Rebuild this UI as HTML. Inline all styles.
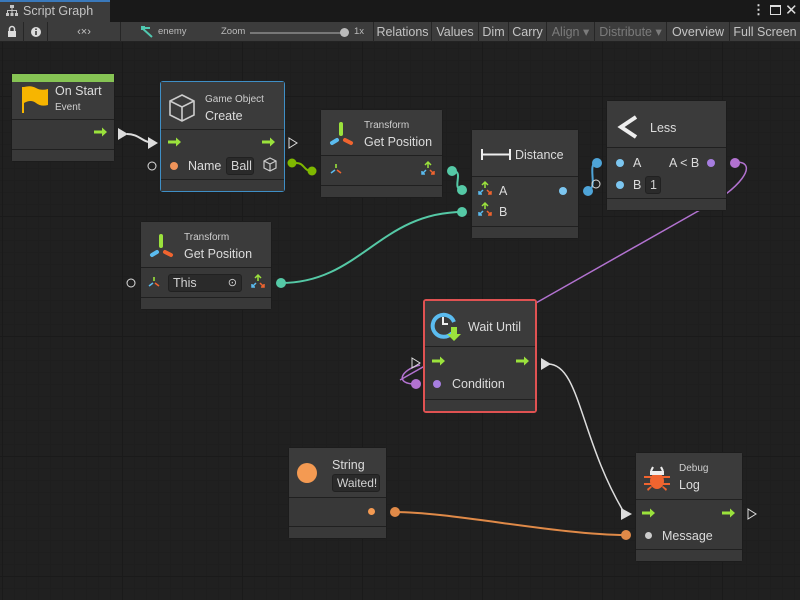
<!DOCTYPE html>
<html><head><meta charset="utf-8"><style>
*{box-sizing:border-box;margin:0;padding:0}
body{width:800px;height:600px;overflow:hidden;background:#202020;font-family:"Liberation Sans",sans-serif;color:#d2d2d2;position:relative}
.grid{position:absolute;left:0;top:42px;width:800px;height:558px;
background-image:linear-gradient(#1a1a1a 1px,transparent 1px),linear-gradient(90deg,#1a1a1a 1px,transparent 1px),linear-gradient(#1e1e1e 1px,transparent 1px),linear-gradient(90deg,#1e1e1e 1px,transparent 1px);
background-size:120px 120px,120px 120px,12px 12px,12px 12px;background-position:0 54px,2px 0,0 6px,2px 0}
.tabbar{position:absolute;left:0;top:0;width:800px;height:22px;background:#191919}
.tab{position:absolute;left:0;top:0;width:110px;height:22px;background:#3c3c3c;border-top:2px solid #3a79bb;font-size:12.5px;line-height:19px;padding-left:23px;color:#c4c4c4}
.tb{position:absolute;top:22px;left:0;width:800px;height:20px;background:#3c3c3c;border-bottom:1px solid #232323;font-size:12.5px}
.tb span{position:absolute;top:0;height:20px;line-height:20px;color:#c4c4c4;border-right:1px solid #262626;text-align:center}
.n{position:absolute;background:#383838;border:1px solid #1c1c1c;border-radius:3px}
.n .h{position:absolute;left:0;right:0;top:0;background:#3b3b3b;border-bottom:1px solid #202020}
.n .f{position:absolute;left:0;right:0;bottom:0;height:12px;border-top:1px solid #202020;background:#393939}
.t{position:absolute;font-size:12.5px;color:#dcdcdc;white-space:nowrap}
.s{position:absolute;font-size:10px;color:#cfcfcf;white-space:nowrap}
.dot{position:absolute;width:8px;height:8px;border-radius:50%}
.fld{position:absolute;background:#2a2a2a;border:1px solid #212121;border-radius:3px;font-size:12.5px;color:#d2d2d2;padding-left:4px;line-height:16px}
svg{position:absolute;left:0;top:0}
</style></head><body>
<div class="grid"></div>
<div class="tabbar"><div class="tab">Script Graph</div>
<svg width="20" height="20" style="left:6px;top:4px"><g fill="#c4c4c4"><rect x="4" y="1" width="4" height="3"/><rect x="5.5" y="4" width="1" height="3"/><rect x="1" y="6" width="10" height="1"/><rect x="1" y="6" width="1" height="3"/><rect x="5.5" y="6" width="1" height="3"/><rect x="10" y="6" width="1" height="3"/><rect x="0" y="9" width="3" height="3"/><rect x="4.5" y="9" width="3" height="3"/><rect x="9" y="9" width="3" height="3"/></g></svg>
<div style="position:absolute;left:752px;top:2px;color:#ddd;font-size:13px;font-weight:bold">⋮</div>
<div style="position:absolute;left:770px;top:5px;width:11px;height:10px;border:1.5px solid #ddd;border-top-width:2.5px"></div>
<div style="position:absolute;left:785px;top:1px;color:#ddd;font-size:15px">✕</div>
</div>
<div class="tb">
<span style="left:0;width:24px"></span>
<span style="left:24px;width:24px"></span>
<span style="left:48px;width:73px;font-size:11px">‹×›</span>
<span style="left:121px;width:253px"></span>
<span style="left:374px;width:58px">Relations</span>
<span style="left:432px;width:47px">Values</span>
<span style="left:479px;width:30px">Dim</span>
<span style="left:509px;width:38px">Carry</span>
<span style="left:547px;width:48px;color:#7b7b7b">Align ▾</span>
<span style="left:595px;width:72px;color:#7b7b7b">Distribute ▾</span>
<span style="left:667px;width:63px">Overview</span>
<span style="left:730px;width:70px;border:none">Full Screen</span>
</div>
<svg width="60" height="20" style="left:0;top:22px"><g fill="#ddd"><rect x="8" y="9" width="8" height="6"/><path d="M9.5 9 V7 A2.5 2.5 0 0 1 14.5 7 V9" fill="none" stroke="#ddd" stroke-width="1.5"/><circle cx="36" cy="10" r="5"/></g><rect x="35.2" y="9" width="1.6" height="4" fill="#3c3c3c"/><rect x="35.2" y="6.5" width="1.6" height="1.5" fill="#3c3c3c"/></svg>
<svg width="20" height="16" style="left:140px;top:25px"><path d="M2 3 L12 12 M2 3 L10 3" stroke="#50c8b0" stroke-width="2" fill="none"/><rect x="1" y="1" width="4" height="4" fill="#50c8b0"/></svg>
<div style="position:absolute;left:158px;top:26px;font-size:9.5px;color:#bbb">enemy</div>
<div style="position:absolute;left:221px;top:26px;font-size:9.5px;color:#bbb">Zoom</div>
<div style="position:absolute;left:250px;top:32px;width:94px;height:2px;background:#777"></div>
<div style="position:absolute;left:340px;top:28px;width:9px;height:9px;border-radius:50%;background:#bbb"></div>
<div style="position:absolute;left:354px;top:26px;font-size:9.5px;color:#bbb">1x</div>

<svg width="800" height="600">
<g fill="none" stroke-width="2">
<path d="M127 134 C140 134,142 143,155 143" stroke="#ddd"/>
<path d="M296 163 C305 163,303 171,312 171" stroke="#7fb800"/>
<path d="M453 171 C465 171,450 190,463 190" stroke="#55c9a6"/>
<path d="M281 283 C360 283,380 212,463 212" stroke="#55c9a6"/>
<path d="M587 190 C600 190,585 162,598 162" stroke="#4ea4d8"/>
<path d="M736 162 C760 162,740 190,700 210 L400 380" stroke="#b272d0" stroke-width="1.5"/>
<path d="M415 384 C395 384,400 370,420 365" stroke="#b272d0" stroke-width="1.5"/>
<path d="M548 364 C580 364,580 440,625 514" stroke="#ddd" stroke-width="1.5"/>
<path d="M395 512 C450 512,560 535,626 535" stroke="#e08a48"/>
</g>
<g fill="#ddd"><path d="M118 128 L128 134 L118 140Z"/><path d="M148 137 L158 143 L148 149Z"/><path d="M541 358 L551 364 L541 370Z"/><path d="M621 508 L632 514 L621 520Z"/></g>
<g fill="none" stroke="#ddd" stroke-width="1"><path d="M289 138 L297 143 L289 148Z"/><path d="M412 358 L420 363 L412 368Z"/><path d="M748 509 L756 514 L748 519Z"/><circle cx="152" cy="166" r="4"/><circle cx="131" cy="283" r="4"/><circle cx="596" cy="184" r="4"/></g>
<circle cx="292" cy="163" r="4.5" fill="#7fb800"/><circle cx="312" cy="171" r="4.5" fill="#7fb800"/>
<circle cx="452" cy="171" r="5" fill="#55c9a6"/><circle cx="462" cy="190" r="5" fill="#55c9a6"/><circle cx="462" cy="212" r="5" fill="#55c9a6"/><circle cx="281" cy="283" r="5" fill="#55c9a6"/>
<circle cx="588" cy="191" r="5" fill="#4ea4d8"/><circle cx="597" cy="163" r="5" fill="#4ea4d8"/>
<circle cx="735" cy="163" r="5" fill="#b272d0"/><circle cx="416" cy="384" r="5" fill="#b272d0"/>
<circle cx="395" cy="512" r="5" fill="#e08a48"/><circle cx="626" cy="535" r="5" fill="#e08a48"/>
</svg>

<div class="n" style="left:11px;top:73px;width:104px;height:89px">
<div style="position:absolute;left:0;right:0;top:0;height:8px;background:#86c454"></div>
<div class="h" style="top:8px;height:38px"></div>
<svg width="30" height="30" style="left:9px;top:11px"><rect x="1" y="2" width="2" height="26" fill="#f7b500"/><path d="M3 2 Q10 0 15 3 T27 4 L27 20 Q20 22 15 18 T3 18Z" fill="#f7b500"/></svg>
<div class="t" style="left:43px;top:10px">On Start</div><div class="s" style="left:43px;top:28px">Event</div>
<div class="f"></div>
</div>
<div class="n" style="left:160px;top:81px;width:125px;height:111px;border-color:#3f8fc6">
<div class="h" style="height:48px"></div>
<svg width="30" height="30" style="left:6px;top:11px"><g fill="none" stroke="#ccc" stroke-width="1.6"><path d="M15 2 L27 8 L27 22 L15 28 L3 22 L3 8Z"/><path d="M3 8 L15 14 L27 8 M15 14 L15 28"/></g></svg>
<div class="s" style="left:44px;top:12px">Game Object</div><div class="t" style="left:44px;top:27px">Create</div>
<div class="dot" style="left:9px;top:80px;background:#f0945a"></div>
<div class="t" style="left:27px;top:77px">Name</div>
<div class="fld" style="left:65px;top:75px;width:28px;height:18px">Ball</div>
<svg width="16" height="16" style="left:101px;top:75px"><g fill="none" stroke="#ccc" stroke-width="1.2"><path d="M8 1 L14 4 L14 11 L8 14 L2 11 L2 4Z M2 4 L8 7 L14 4 M8 7 L8 14"/></g></svg>
<div class="f"></div>
</div>
<div class="n" style="left:320px;top:109px;width:123px;height:89px">
<div class="h" style="height:46px"></div>
<div class="s" style="left:43px;top:10px">Transform</div><div class="t" style="left:43px;top:25px">Get Position</div>
<div class="f"></div>
</div>
<div class="n" style="left:471px;top:129px;width:108px;height:110px">
<div class="h" style="height:47px"></div>
<svg width="30" height="12" style="left:9px;top:19px"><path d="M1 0 V11 M29 0 V11 M1 5.5 H29" stroke="#eee" stroke-width="2"/></svg>
<div class="t" style="left:43px;top:18px">Distance</div>
<div class="t" style="left:27px;top:54px">A</div><div class="t" style="left:27px;top:75px">B</div>
<div class="dot" style="left:87px;top:57px;background:#7cc6f0"></div>
<div class="f"></div>
</div>
<div class="n" style="left:606px;top:100px;width:121px;height:111px">
<div class="h" style="height:47px"></div>
<svg width="22" height="24" style="left:10px;top:14px"><path d="M19 2 L4 12 L19 22" fill="none" stroke="#eee" stroke-width="4"/></svg>
<div class="t" style="left:43px;top:20px">Less</div>
<div class="dot" style="left:9px;top:58px;background:#7cc6f0"></div><div class="t" style="left:26px;top:55px">A</div>
<div class="t" style="left:62px;top:55px">A &lt; B</div><div class="dot" style="left:100px;top:58px;background:#a77ee0"></div>
<div class="dot" style="left:9px;top:80px;background:#7cc6f0"></div><div class="t" style="left:26px;top:77px">B</div>
<div class="fld" style="left:38px;top:75px;width:16px;height:18px">1</div>
<div class="f"></div>
</div>
<div class="n" style="left:140px;top:221px;width:132px;height:89px">
<div class="h" style="height:46px"></div>
<div class="s" style="left:43px;top:10px">Transform</div><div class="t" style="left:43px;top:25px">Get Position</div>
<div class="fld" style="left:27px;top:52px;width:74px;height:18px">This<span style="position:absolute;right:4px;top:0;font-size:11px">⊙</span></div>
<div class="f"></div>
</div>
<div class="n" style="left:423px;top:299px;width:114px;height:114px;border:2px solid #e05252">
<div class="h" style="height:46px"></div>
<svg width="34" height="34" style="left:5px;top:9px"><path d="M22 23 A11 11 0 1 1 24 12" fill="none" stroke="#5bbcf0" stroke-width="4"/><path d="M13 7 V14 H18" fill="none" stroke="#eee" stroke-width="2"/><path d="M21 17 V24 H17 L24 31 L31 24 H27 V17Z" fill="#9be23c"/></svg>
<div class="t" style="left:43px;top:19px">Wait Until</div>
<div class="dot" style="left:8px;top:79px;background:#a77ee0"></div>
<div class="t" style="left:27px;top:76px">Condition</div>
<div class="f"></div>
</div>
<div class="n" style="left:288px;top:447px;width:99px;height:92px">
<div class="h" style="height:50px"></div>
<div style="position:absolute;left:8px;top:15px;width:20px;height:20px;border-radius:50%;background:#f49a52"></div>
<div class="t" style="left:43px;top:10px">String</div>
<div class="fld" style="left:43px;top:26px;width:48px;height:18px;font-size:12px">Waited!</div>
<div class="dot" style="left:79px;top:60px;width:7px;height:7px;background:#f49a52"></div>
<div class="f"></div>
</div>
<div class="n" style="left:635px;top:452px;width:108px;height:110px">
<div class="h" style="height:47px"></div>
<svg width="30" height="30" style="left:6px;top:10px"><g fill="#f0642f"><ellipse cx="15" cy="18" rx="7" ry="8"/><path d="M2 13 H28 V15 H2Z M2 20 H28 V22 H2Z M5 26 L9 23 L10 24 L6 28Z M25 26 L21 23 L20 24 L24 28Z"/></g><path d="M9 8 L11 4 M21 8 L19 4 M9 9 H21 V11 H9Z" stroke="#eee" stroke-width="2" fill="#eee"/></svg>
<div class="s" style="left:43px;top:10px">Debug</div><div class="t" style="left:43px;top:25px">Log</div>
<div class="dot" style="left:9px;top:79px;width:7px;height:7px;background:#ccc"></div>
<div class="t" style="left:26px;top:76px">Message</div>
<div class="f"></div>
</div>

<svg width="800" height="600">
<g fill="#9be23c">
<path id="fa" d="M0 -1.5 H8 V-4.5 L13 0 L8 4.5 V1.5 H0Z" transform="translate(94 132)"/>
<use href="#fa" transform="translate(74 10)"/><use href="#fa" transform="translate(168 10)"/>
<use href="#fa" transform="translate(338 229)"/><use href="#fa" transform="translate(422 229)"/>
<use href="#fa" transform="translate(548 381)"/><use href="#fa" transform="translate(628 381)"/>
</g>
<g id="tr" stroke-linecap="round" stroke-width="4" fill="none"><path d="M341 124 V134" stroke="#9be23c"/><path d="M337 140 L332 143" stroke="#5bbcf0"/><path d="M345 140 L351 143" stroke="#f0642f"/></g>
<use href="#tr" transform="translate(-180 112)"/>
<g id="sm" stroke-width="1.6" fill="none"><path d="M336 164 V168" stroke="#9be23c"/><path d="M335 170 L331 173" stroke="#5bbcf0"/><path d="M337 170 L341 173" stroke="#f0642f"/></g>
<use href="#sm" transform="translate(-182 113)"/>
<g id="ax" stroke-width="1.5" fill="none"><path d="M428 168 V163 M425 165 L428 162 L431 165" stroke="#9be23c"/><path d="M426 170 L422 174 M422 171 V174 H425" stroke="#5bbcf0"/><path d="M430 170 L434 174 M434 171 V174 H431" stroke="#f0642f"/></g>
<use href="#ax" transform="translate(57 20)"/><use href="#ax" transform="translate(57 41)"/><use href="#ax" transform="translate(-170 113)"/>
</svg>
</body></html>
